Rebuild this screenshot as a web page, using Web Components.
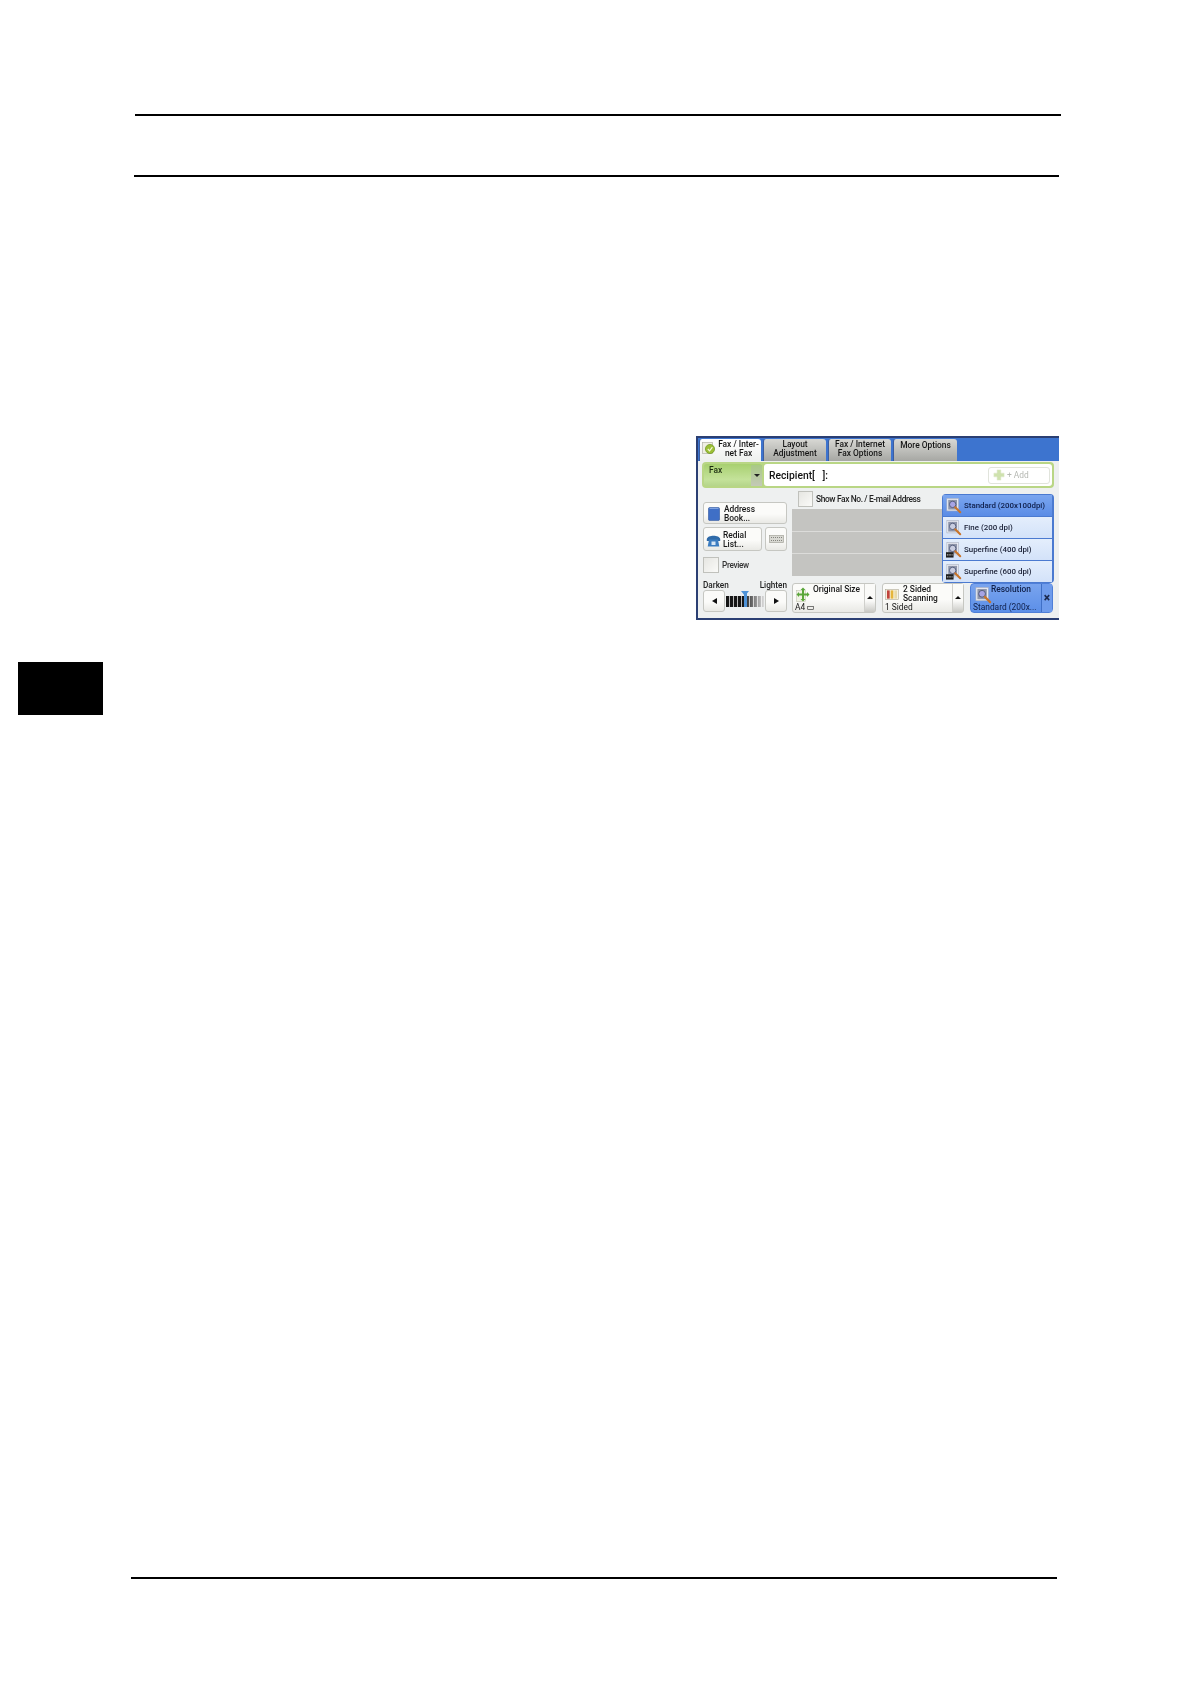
<!DOCTYPE html>
<html>
<head>
<meta charset="utf-8">
<style>
  html, body { margin: 0; background: #fff; }
</style>
</head>
<body>
<page-sheet>
  <fax-panel></fax-panel>
</page-sheet>

<script>
(function registerFaxScreen() {
  'use strict';

  const BASE_FONT = 'Roboto, "Liberation Sans", sans-serif';

  // magnifier over a framed sheet, with an optional dark badge for the superfine modes
  function loupeIcon(badge, lens, size) {
    const px = size || 16;
    return `<svg width="${px}" height="${px}" viewBox="0 0 18 18">
      <rect x="1" y="0.5" width="13" height="14" fill="#eef0f6" stroke="#a9afc0" stroke-width=".7"/>
      <rect x="2.5" y="2" width="10" height="11" fill="#8e95aa"/>
      <circle cx="7.5" cy="7.2" r="3.6" fill="${lens || '#c9cde0'}" stroke="#4f5878" stroke-width="1"/>
      <path d="M10.4 10.4 L16 16" stroke="#c9742a" stroke-width="2.3" stroke-linecap="round"/>
      ${badge ? '<rect x="0" y="11.5" width="8.5" height="6" fill="#1e1e1e"/><path d="M1 14.5h6.5" stroke="#ddd" stroke-width="1.2" stroke-dasharray="1 1"/>' : ''}
    </svg>`;
  }

  const ICONS = {
    check: `<svg width="14" height="14" viewBox="0 0 14 14">
      <rect x="0.5" y="1.5" width="10" height="11" fill="#efefe2" stroke="#b4b4a6" stroke-width=".7"/>
      <circle cx="8" cy="8" r="4.6" fill="#9cbf35" stroke="#6c9420" stroke-width=".7"/>
      <path d="M5.8 8 L7.6 9.8 L10.4 6.2" fill="none" stroke="#f4f8d8" stroke-width="1.2"/>
    </svg>`,
    book: `<svg width="12" height="14" viewBox="0 0 12 14">
      <rect x="0.4" y="0.4" width="11.2" height="13.2" rx="1.6" fill="#3f6fc6" stroke="#2f559c" stroke-width=".6"/>
      <path d="M1.5 1.5h9" stroke="#7fa3e2" stroke-width="1"/>
    </svg>`,
    phone: `<svg width="15" height="13" viewBox="0 0 14 13">
      <path d="M0.3 5 C1 0.5 13 0.5 13.7 5 L13.7 7 L0.3 7 Z" fill="#2f6aa8"/>
      <path d="M2.5 5.5 L11.5 5.5 L12.8 12.5 L1.2 12.5 Z" fill="#3b7cc0"/>
      <rect x="5" y="7.5" width="4" height="3.5" fill="#d7e6f5"/>
    </svg>`,
    keypad: `<svg width="15" height="8" viewBox="0 0 15 8">
      <rect x="0.5" y="0.5" width="14" height="7" fill="#d8d8d2" stroke="#a4a49c" stroke-width=".7"/>
      <path d="M2 2.5h11M2 5.5h11" stroke="#85857e" stroke-width="1.2" stroke-dasharray="1 1"/>
    </svg>`,
    plus: `<svg width="12" height="12" viewBox="0 0 13 13">
      <path d="M4.5 1h4v3.5h3.5v4h-3.5v3.5h-4v-3.5h-3.5v-4h3.5z" fill="#cfe2ae" stroke="#dce8c8" stroke-width=".6"/>
    </svg>`,
    arrows: `<svg width="14" height="15" viewBox="0 0 14 15">
      <rect x="0.5" y="3.5" width="9" height="11" fill="#f0f2e4" stroke="#b8bca8" stroke-width=".5"/>
      <path d="M7 0.5 L9.5 3 H8 V6.5 H11 V5 L13.5 7.5 L11 10 V8.5 H8 V12 H9.5 L7 14.5 L4.5 12 H6 V8.5 H3 V10 L0.5 7.5 L3 5 V6.5 H6 V3 H4.5 Z" fill="#5aa63a"/>
    </svg>`,
    sided: `<svg width="14" height="11" viewBox="0 0 15 12">
      <rect x="0.5" y="0.5" width="14" height="11" fill="#f7f4e6" stroke="#a8a490" stroke-width=".6"/>
      <rect x="2" y="1.5" width="3" height="9" fill="#c0433a"/>
      <rect x="6" y="1.5" width="3" height="9" fill="#e5b53a"/>
      <rect x="10" y="1.5" width="3" height="9" fill="#e7d9a8"/>
    </svg>`,
    paper: `<svg width="7" height="4" viewBox="0 0 8 5">
      <rect x="0.5" y="0.5" width="7" height="4" fill="none" stroke="#333" stroke-width=".8"/>
    </svg>`
  };

  class PageSheet extends HTMLElement {
    constructor() {
      super();
      this.attachShadow({ mode: 'open' });
      this.shadowRoot.innerHTML = `
        <style>
          :host {
            display: block;
            width: 1190px;
            height: 1684px;
            background: #fff;
            overflow: hidden;
          }
          .rule { height: 2px; background: #000; }
          .rule.top { margin: 114px 129px 0 135px; }
          .rule.sub { margin: 59px 131px 0 134px; }
          .content {
            display: grid;
            grid-template-columns: 85px 1fr;
            height: 1400px;
          }
          .thumb {
            margin: 485px 0 0 18px;
            width: 85px;
            height: 53px;
            background: #000;
          }
          .shot { margin: 0 0 0 611px; padding-top: 259px; }
          .rule.foot { margin: 0 133px 0 131px; }
        </style>
        <div class="rule top"></div>
        <div class="rule sub"></div>
        <div class="content">
          <div class="thumb"></div>
          <div class="shot"><slot></slot></div>
        </div>
        <div class="rule foot"></div>
      `;
    }
  }

  class TabButton extends HTMLElement {
    constructor() {
      super();
      this.attachShadow({ mode: 'open' });
      this.shadowRoot.innerHTML = `
        <style>
          :host {
            display: flex;
            align-items: center;
            justify-content: center;
            box-sizing: border-box;
            height: 100%;
            padding-bottom: 2px;
            border-radius: 3px 3px 0 0;
            background: linear-gradient(#d8d8d4, #a6a7a3);
            color: #151515;
            font-size: 8.4px;
            font-weight: 500;
            line-height: 9px;
            text-align: center;
            white-space: pre-line;
          }
          :host([active]) {
            background: linear-gradient(#fff, #eef0ee);
            gap: 2px;
          }
        </style>
        <slot name="icon"></slot><div><slot></slot></div>
      `;
    }
  }

  class PanelButton extends HTMLElement {
    constructor() {
      super();
      this.attachShadow({ mode: 'open' });
      this.shadowRoot.innerHTML = `
        <style>
          :host {
            display: flex;
            align-items: center;
            box-sizing: border-box;
            border: 1px solid #c6c7c2;
            border-radius: 3px;
            background: linear-gradient(#fbfbf9 55%, #e9e9e5);
            color: #161616;
            font-size: 8.4px;
            line-height: 9px;
            font-weight: 500;
          }
        </style>
        <slot></slot>
      `;
    }
  }

  class ResolutionOption extends HTMLElement {
    constructor() {
      super();
      this.attachShadow({ mode: 'open' });
      const selected = this.hasAttribute('selected');
      this.shadowRoot.innerHTML = `
        <style>
          :host {
            display: flex;
            align-items: center;
            gap: 2px;
            box-sizing: border-box;
            height: 21px;
            padding-left: 3px;
            background: linear-gradient(#e4eefc, #d3e2f9);
            color: #1a2036;
            font-size: 7.9px;
            font-weight: 500;
            white-space: nowrap;
          }
          :host([selected]) {
            background: linear-gradient(#7ba6ef, #5a8ce6);
            color: #0f1f4a;
          }
        </style>
        ${loupeIcon(this.hasAttribute('badge'), selected ? '#a7a4e4' : '')}<span><slot></slot></span>
      `;
    }
  }

  class FaxPanel extends HTMLElement {
    constructor() {
      super();
      this.attachShadow({ mode: 'open' });
      this.shadowRoot.innerHTML = `
        <style>
          :host {
            display: block;
            position: relative;
            box-sizing: border-box;
            width: 363px;
            height: 184px;
            border-top: 2px solid #2b3f73;
            border-left: 2px solid #2b3f73;
            border-bottom: 2px solid #2b3f73;
            background: #eef0f0;
            font-family: ${BASE_FONT};
            filter: blur(.3px);
          }
          .tabs {
            display: grid;
            grid-template-columns: 62px 63px 63px 64px;
            gap: 2px;
            box-sizing: border-box;
            height: 23px;
            padding: 1px 0 0 1px;
            background: #3d74cf;
          }
          .tabs tab-button { border-left: 1px solid #3c5ea0; }
          .address {
            display: flex;
            box-sizing: border-box;
            height: 26px;
            margin: 1px 5px 0 4px;
            padding: 2px 2px 2px 2px;
            gap: 2px;
            background: #b9d685;
            border-radius: 4px;
          }
          .fax-type {
            width: 58px;
            display: grid;
            grid-template-columns: 1fr 11px;
            background: linear-gradient(#a8d070, #c4e29a 70%, #b5d58b);
            border-radius: 3px;
            font-size: 8.4px;
            font-weight: 500;
            color: #1c2c10;
            padding: 1px 0 0 5px;
            box-sizing: border-box;
          }
          .fax-type i {
            display: flex;
            align-items: center;
            justify-content: center;
            background: linear-gradient(#a9c985, #c4c9b8);
            font-style: normal;
          }
          .fax-type i::after {
            content: '';
            border: 3px solid transparent;
            border-top: 3px solid #222;
            border-bottom: 0;
          }
          .recipient {
            flex: 1;
            display: flex;
            align-items: center;
            justify-content: space-between;
            background: #fff;
            border-radius: 3px;
            padding: 0 2px 0 5px;
            font-size: 10.3px;
            font-weight: 500;
            color: #111;
          }
          .add {
            display: flex;
            align-items: center;
            gap: 2px;
            box-sizing: border-box;
            width: 62px;
            height: 17px;
            padding-left: 4px;
            border: 1px solid #e1e4dc;
            border-radius: 3px;
            color: #b5b8b2;
            font-size: 8.4px;
            font-weight: 400;
          }
          .body {
            display: grid;
            grid-template-columns: 84px 1fr;
            gap: 5px;
            margin: 2px 0 0 5px;
            height: 124px;
          }
          .left { display: flex; flex-direction: column; padding-top: 12px; }
          .addr { height: 22px; padding: 2px 0 0 4px; gap: 4px; }
          .redial-row { display: grid; grid-template-columns: 59px 22px; gap: 3px; margin-top: 3px; height: 24px; }
          .redial { padding: 2px 0 0 2px; gap: 2px; }
          .keys { justify-content: center; }
          .check-row {
            display: flex;
            align-items: center;
            gap: 3px;
            font-size: 8.2px;
            color: #333;
            font-weight: 500;
          }
          .box {
            box-sizing: border-box;
            width: 16px;
            height: 16px;
            border: 1px solid #c0c1bc;
            background: linear-gradient(135deg, #e6e6e2, #fafaf8);
          }
          .preview { margin-top: 6px; letter-spacing: -.3px; }
          .density-labels {
            display: flex;
            justify-content: space-between;
            margin-top: 7px;
            font-size: 8.2px;
            line-height: 10px;
            font-weight: 500;
            color: #222;
          }
          .density {
            display: grid;
            grid-template-columns: 22px 1fr 22px;
            gap: 1px;
            align-items: center;
            height: 22px;
          }
          .density panel-button { height: 22px; justify-content: center; }
          .arrow-l { border: 3px solid transparent; border-right: 5px solid #111; border-left: 0; }
          .arrow-r { border: 3px solid transparent; border-left: 5px solid #111; border-right: 0; }
          .bar {
            position: relative;
            height: 11px;
            background: repeating-linear-gradient(90deg, #151515 0 3px, #b8b8b8 3px 4px);
          }
          .bar::after {
            content: '';
            position: absolute;
            inset: 0;
            background: linear-gradient(90deg, rgba(255,255,255,0) 45%, rgba(255,255,255,.85));
          }
          .pointer {
            position: absolute;
            z-index: 1;
            left: 18px;
            top: -5px;
            width: 3px;
            height: 16px;
            background: #4f93d8;
          }
          .pointer::before {
            content: '';
            position: absolute;
            left: -3px;
            top: 0;
            border: 4.5px solid transparent;
            border-top: 5px solid #4f93d8;
            border-bottom: 0;
          }
          .main { display: flex; flex-direction: column; }
          .show { height: 17px; margin-left: 6px; gap: 3px; }
          .show .box { width: 15px; height: 16px; }
          .show-text { font-size: 8.4px; letter-spacing: -.37px; white-space: nowrap; color: #222; }
          .list {
            display: grid;
            grid-template-rows: 22px 21px 22px;
            gap: 1px;
            width: 153px;
            margin-top: 2px;
            background: #dcdcda;
          }
          .list div { background: #c4c4c1; }
          .features {
            display: grid;
            grid-template-columns: 84px 82px 83px;
            gap: 6px;
            margin-top: 7px;
            height: 30px;
          }
          .feature { position: relative; display: block; height: 30px; }
          .feature .text { position: absolute; left: 20px; top: 1px; }
          .feature .value { position: absolute; left: 2px; bottom: 0; font-weight: 400; white-space: nowrap; }
          .feature .ico { position: absolute; left: 3px; top: 3px; }
          .feature .scroll {
            position: absolute;
            right: 0;
            top: 0;
            bottom: 0;
            width: 11px;
            display: flex;
            justify-content: center;
            padding-top: 12px;
            box-sizing: border-box;
            background: linear-gradient(#fafaf8 60%, #c9c9c5);
            border-left: 1px solid #d0d0cc;
          }
          .feature .scroll::after {
            content: '';
            height: 0;
            border: 3px solid transparent;
            border-bottom: 3px solid #111;
            border-top: 0;
          }
          .feature.on {
            border-color: #4f7fd8;
            background: linear-gradient(#79a4ee, #5c8fe8);
            color: #10204a;
            border-radius: 4px;
          }
          .feature.on .text { left: 20px; }
          .feature.on .ico { top: 3px; left: 4px; }
          .feature .close {
            position: absolute;
            right: 0;
            top: 0;
            bottom: 0;
            width: 10px;
            display: flex;
            align-items: center;
            justify-content: center;
            background: #6f9cec;
            border-left: 1px solid #3f6fc6;
            font-size: 12px;
            font-weight: 900;
            color: #1c2a4e;
          }
          .popup {
            position: absolute;
            left: 244px;
            top: 56px;
            width: 112px;
            display: flex;
            flex-direction: column;
            gap: 1px;
            box-sizing: border-box;
            padding: 1px 2px 1px 1px;
            background: #4b7ad0;
            border-radius: 4px;
          }
        </style>
        <div class="tabs">
          <tab-button active><span slot="icon">${ICONS.check}</span>Fax / Inter-
net Fax</tab-button>
          <tab-button>Layout
Adjustment</tab-button>
          <tab-button>Fax / Internet
Fax Options</tab-button>
          <tab-button style="align-items:flex-start;padding-top:2px">More Options</tab-button>
        </div>
        <div class="address">
          <div class="fax-type"><span>Fax</span><i></i></div>
          <div class="recipient"><span>Recipient[&nbsp;&nbsp;&nbsp;]:</span><div class="add">${ICONS.plus}<span>+ Add</span></div></div>
        </div>
        <div class="body">
          <div class="left">
            <panel-button class="addr">${ICONS.book}<span>Address<br>Book...</span></panel-button>
            <div class="redial-row">
              <panel-button class="redial">${ICONS.phone}<span>Redial<br>List...</span></panel-button>
              <panel-button class="keys">${ICONS.keypad}</panel-button>
            </div>
            <div class="check-row preview"><div class="box"></div><span>Preview</span></div>
            <div class="density-labels"><span>Darken</span><span>Lighten</span></div>
            <div class="density">
              <panel-button><span class="arrow-l"></span></panel-button>
              <div style="position:relative"><div class="pointer"></div><div class="bar"></div></div>
              <panel-button><span class="arrow-r"></span></panel-button>
            </div>
          </div>
          <div class="main">
            <div class="check-row show"><div class="box"></div><span class="show-text">Show Fax No. / E-mail Address</span></div>
            <div class="list"><div></div><div></div><div></div></div>
            <div class="features">
              <panel-button class="feature">
                <span class="ico">${ICONS.arrows}</span>
                <span class="text">Original Size</span>
                <span class="value">A4 ${ICONS.paper}</span>
                <span class="scroll"></span>
              </panel-button>
              <panel-button class="feature">
                <span class="ico" style="left:2px;top:5px">${ICONS.sided}</span>
                <span class="text">2 Sided<br>Scanning</span>
                <span class="value">1 Sided</span>
                <span class="scroll"></span>
              </panel-button>
              <panel-button class="feature on">
                <span class="ico">${loupeIcon(false, '#a7a4e4', 17)}</span>
                <span class="text">Resolution</span>
                <span class="value">Standard (200x...</span>
                <span class="close">×</span>
              </panel-button>
            </div>
          </div>
        </div>
        <div class="popup">
          <resolution-option selected>Standard (200x100dpi)</resolution-option>
          <resolution-option>Fine (200 dpi)</resolution-option>
          <resolution-option badge>Superfine (400 dpi)</resolution-option>
          <resolution-option badge>Superfine (600 dpi)</resolution-option>
        </div>
      `;
    }
  }

  customElements.define('page-sheet', PageSheet);
  customElements.define('tab-button', TabButton);
  customElements.define('panel-button', PanelButton);
  customElements.define('resolution-option', ResolutionOption);
  customElements.define('fax-panel', FaxPanel);
})();
</script>
</body>
</html>
